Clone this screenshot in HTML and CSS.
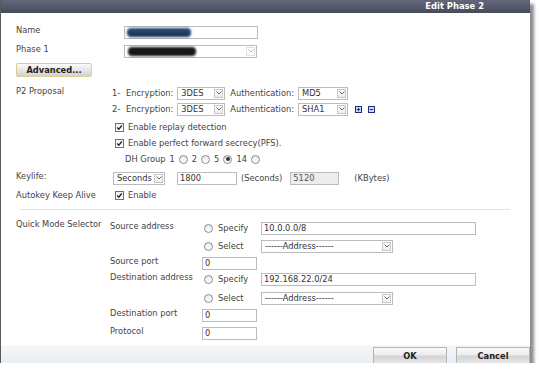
FILE: index.html
```html
<!DOCTYPE html>
<html lang="en">
<head>
  <meta charset="UTF-8">
  <title>Edit Phase 2</title>
  <link rel="stylesheet" href="styles.css">
</head>
<body>

  <div class="dialog">
    <div class="titlebar">Edit Phase 2</div>

    <div class="content">
      <!-- Name / Phase 1 -->
      <div class="row r-name">
        <span class="lbl">Name</span>
        <span class="field w-name"><span class="blur blue"></span></span>
      </div>
      <div class="row r-phase1">
        <span class="lbl">Phase 1</span>
        <span class="select w-phase1"><span class="val"><span class="blur black"></span></span><span class="arrow light"><svg width="6" height="4" viewBox="0 0 6 4"><path d="M0.5 0.5 L3 3 L5.5 0.5" fill="none" stroke="#b5b5b5" stroke-width="1"/></svg></span></span>
      </div>
      <div class="row r-adv">
        <button class="btn-adv">Advanced...</button>
      </div>

      <!-- P2 Proposal -->
      <div class="row r-p2a">
        <span class="lbl">P2 Proposal</span>
        <span class="num">1-</span>
        <span class="txt">Encryption:</span>
        <span class="select w-enc"><span class="val">3DES</span><span class="arrow"><svg width="6" height="4" viewBox="0 0 6 4"><path d="M0.5 0.5 L3 3 L5.5 0.5" fill="none" stroke="#666" stroke-width="1"/></svg></span></span>
        <span class="txt auth">Authentication:</span>
        <span class="select w-auth"><span class="val">MD5</span><span class="arrow"><svg width="6" height="4" viewBox="0 0 6 4"><path d="M0.5 0.5 L3 3 L5.5 0.5" fill="none" stroke="#666" stroke-width="1"/></svg></span></span>
      </div>
      <div class="row r-p2b">
        <span class="lbl"></span>
        <span class="num">2-</span>
        <span class="txt">Encryption:</span>
        <span class="select w-enc"><span class="val">3DES</span><span class="arrow"><svg width="6" height="4" viewBox="0 0 6 4"><path d="M0.5 0.5 L3 3 L5.5 0.5" fill="none" stroke="#666" stroke-width="1"/></svg></span></span>
        <span class="txt auth">Authentication:</span>
        <span class="select w-auth"><span class="val">SHA1</span><span class="arrow"><svg width="6" height="4" viewBox="0 0 6 4"><path d="M0.5 0.5 L3 3 L5.5 0.5" fill="none" stroke="#666" stroke-width="1"/></svg></span></span>
        <svg class="icon-plus" width="7" height="7" viewBox="0 0 7 7"><rect x="0.5" y="0.5" width="6" height="6" fill="#d4d9f2" stroke="#1f2d86"/><path d="M3.5 1.8 V5.2 M1.8 3.5 H5.2" stroke="#1f2d86" stroke-width="1"/></svg>
        <svg class="icon-minus" width="7" height="7" viewBox="0 0 7 7"><rect x="0.5" y="0.5" width="6" height="6" fill="#d4d9f2" stroke="#1f2d86"/><path d="M1.8 3.5 H5.2" stroke="#1f2d86" stroke-width="1"/></svg>
      </div>
      <div class="row r-check">
        <span class="lbl"></span>
        <span class="check"><svg width="7" height="7" viewBox="0 0 7 7"><path d="M1.2 3.5 L2.8 5.2 L5.8 1.5" fill="none" stroke="#222" stroke-width="1.3"/></svg></span>
        <span class="txt">Enable replay detection</span>
      </div>
      <div class="row r-tight">
        <span class="lbl"></span>
        <span class="check"><svg width="7" height="7" viewBox="0 0 7 7"><path d="M1.2 3.5 L2.8 5.2 L5.8 1.5" fill="none" stroke="#222" stroke-width="1.3"/></svg></span>
        <span class="txt">Enable perfect forward secrecy(PFS).</span>
      </div>
      <div class="row r-tight">
        <span class="lbl"></span>
        <span class="dh">
          <span class="txt">DH Group</span>
          <span class="txt">1</span><span class="radio"></span>
          <span class="txt">2</span><span class="radio"></span>
          <span class="txt">5</span><span class="radio on"></span>
          <span class="txt">14</span><span class="radio"></span>
        </span>
      </div>

      <!-- Keylife -->
      <div class="row r-keylife">
        <span class="lbl">Keylife:</span>
        <span class="select w-secs"><span class="val">Seconds</span><span class="arrow"><svg width="6" height="4" viewBox="0 0 6 4"><path d="M0.5 0.5 L3 3 L5.5 0.5" fill="none" stroke="#666" stroke-width="1"/></svg></span></span>
        <span class="field w-life">1800</span>
        <span class="txt">(Seconds)</span>
        <span class="field w-kb disabled">5120</span>
        <span class="txt kb">(KBytes)</span>
      </div>
      <div class="row r-keep">
        <span class="lbl mid">Autokey Keep Alive</span>
        <span class="check"><svg width="7" height="7" viewBox="0 0 7 7"><path d="M1.2 3.5 L2.8 5.2 L5.8 1.5" fill="none" stroke="#222" stroke-width="1.3"/></svg></span>
        <span class="txt">Enable</span>
      </div>

      <div class="separator"></div>

      <!-- Quick Mode Selector -->
      <div class="qms">
        <span class="lbl qms-lbl">Quick Mode Selector</span>
        <div class="qms-rows">
          <div class="row q-first">
            <span class="sub">Source address</span>
            <span class="opt"><span class="radio"></span><span class="txt">Specify</span></span>
            <span class="field w-addr">10.0.0.0/8</span>
          </div>
          <div class="row q-4">
            <span class="sub"></span>
            <span class="opt"><span class="radio"></span><span class="txt">Select</span></span>
            <span class="select w-list"><span class="val">------Address------</span><span class="arrow"><svg width="6" height="4" viewBox="0 0 6 4"><path d="M0.5 0.5 L3 3 L5.5 0.5" fill="none" stroke="#666" stroke-width="1"/></svg></span></span>
          </div>
          <div class="row q-3">
            <span class="sub">Source port</span>
            <span class="field w-port">0</span>
          </div>
          <div class="row q-2">
            <span class="sub">Destination address</span>
            <span class="opt"><span class="radio"></span><span class="txt">Specify</span></span>
            <span class="field w-addr">192.168.22.0/24</span>
          </div>
          <div class="row q-5">
            <span class="sub"></span>
            <span class="opt"><span class="radio"></span><span class="txt">Select</span></span>
            <span class="select w-list"><span class="val">------Address------</span><span class="arrow"><svg width="6" height="4" viewBox="0 0 6 4"><path d="M0.5 0.5 L3 3 L5.5 0.5" fill="none" stroke="#666" stroke-width="1"/></svg></span></span>
          </div>
          <div class="row q-3">
            <span class="sub">Destination port</span>
            <span class="field w-port">0</span>
          </div>
          <div class="row q-4">
            <span class="sub">Protocol</span>
            <span class="field w-port">0</span>
          </div>
        </div>
      </div>
    </div>

    <div class="footer">
      <button class="btn">OK</button>
      <button class="btn">Cancel</button>
    </div>
  </div>

</body>
</html>
```

FILE: styles.css
```css
/* Global */
body {
  margin: 0;
  background: #fff;
  font-family: 'DejaVu Sans', Verdana, sans-serif;
  font-size: 8.3px;
  color: #444;
}

.dialog {
  width: 530px;
  height: 363px;
  background: #fff;
  border-left: 1px solid #5a5a5a;
  box-shadow: 4px 4px 3px rgba(0, 0, 0, 0.45);
  display: flex;
  flex-direction: column;
  box-sizing: border-box;
}

/* Title bar */
.titlebar {
  height: 13px;
  line-height: 13px;
  background: linear-gradient(#62677a, #464b5c);
  color: #fff;
  font-weight: bold;
  font-size: 8.4px;
  text-align: right;
  padding-right: 46px;
}

.content {
  flex: 1;
  padding-left: 15px;
}

/* Rows */
.row {
  display: flex;
  align-items: center;
  height: 14px;
  margin-top: 3px;
}

.r-name { margin-top: 12px; }
.r-phase1 { margin-top: 5px; }
.r-adv { margin-top: 5px; }
.r-p2a { margin-top: 9px; }
.r-p2b { margin-top: 2px; }
.r-check { margin-top: 4px; }
.r-tight { margin-top: 2px; }
.r-keylife { margin-top: 5px; }
.r-keep { margin-top: 3px; }

.lbl {
  width: 96px;
  flex: none;
  align-self: flex-start;
  line-height: 10px;
}

.lbl.mid {
  align-self: center;
}

.txt {
  white-space: nowrap;
}

/* Inputs */
.field, .select {
  height: 13px;
  box-sizing: border-box;
  border: 1px solid #bcbcbc;
  background: #fff;
  line-height: 11px;
  padding-left: 2px;
  display: flex;
  align-items: center;
  flex: none;
  color: #333;
}

.select {
  padding-left: 0;
  justify-content: space-between;
}

.select .val {
  padding-left: 3px;
  padding-top: 1px;
  white-space: nowrap;
  display: flex;
  align-items: center;
}

.select .arrow {
  width: 9px;
  height: 9px;
  margin-right: 1px;
  border: 1px solid #c6c6c6;
  background: linear-gradient(#fff, #eee);
  display: flex;
  align-items: center;
  justify-content: center;
  box-sizing: border-box;
}

.select .arrow.light {
  border-color: #e0e0e0;
  background: #fff;
}

.disabled {
  background: #ededed;
  color: #555;
}

.w-name { width: 134px; margin-left: 12px; }
.w-phase1 { width: 133px; margin-left: 12px; }
.w-enc { width: 48px; margin-left: 4px; }
.w-auth { width: 50px; margin-left: 4px; }
.w-secs { width: 52px; margin-left: 1px; }
.w-life { width: 60px; margin-left: 12px; margin-right: 4px; }
.w-kb { width: 49px; margin-left: 8px; }
.w-addr { width: 215px; }
.w-list { width: 132px; }
.w-port { width: 55px; }

.kb { margin-left: 15px; }

.blur {
  display: block;
  height: 9px;
  border-radius: 4px;
  filter: blur(1px);
}

.blur.blue {
  width: 64px;
  background: linear-gradient(#2a4e78, #15304f);
}

.blur.black {
  width: 68px;
  background: #181818;
}

/* P2 proposal */
.num {
  width: 14px;
  flex: none;
}

.auth {
  margin-left: 5px;
}

.icon-plus {
  margin-left: 7px;
}

.icon-minus {
  margin-left: 6px;
}

/* Checkboxes and radios */
.check {
  width: 9px;
  height: 9px;
  box-sizing: border-box;
  border: 1px solid #707070;
  background: linear-gradient(#f2f2f2, #fff);
  margin-left: 3px;
  margin-right: 4px;
  display: flex;
  align-items: center;
  justify-content: center;
  flex: none;
}

.radio {
  width: 9px;
  height: 9px;
  box-sizing: border-box;
  border: 1px solid #8c8c8c;
  border-radius: 50%;
  background: linear-gradient(#e8e8e8, #fff);
  display: inline-flex;
  align-items: center;
  justify-content: center;
  flex: none;
}

.radio.on::after {
  content: "";
  width: 4px;
  height: 4px;
  border-radius: 50%;
  background: #333;
}

.dh {
  display: flex;
  align-items: center;
  gap: 4px;
  margin-left: 13px;
}

/* Separator */
.separator {
  height: 1px;
  background: #e2e2e2;
  margin: 7px 20px 0 4px;
}

/* Quick mode selector */
.qms {
  display: flex;
}

.qms-lbl {
  width: 94px;
  margin-top: 9px;
}

.qms-rows {
  display: flex;
  flex-direction: column;
}

.q-first { margin-top: 11px; }
.q-2 { margin-top: 2px; }
.q-3 { margin-top: 3px; }
.q-4 { margin-top: 4px; }
.q-5 { margin-top: 5px; }

.sub {
  width: 92px;
  flex: none;
  align-self: flex-start;
  line-height: 10px;
}

.opt {
  width: 57px;
  flex: none;
  display: flex;
  align-items: center;
  gap: 5px;
  margin-left: 2px;
}

/* Buttons */
.btn-adv {
  width: 76px;
  height: 14px;
  padding: 0;
  font-family: inherit;
  font-size: 8.3px;
  font-weight: bold;
  color: #222;
  border: 1px solid #d9cf8f;
  border-radius: 2px;
  background: linear-gradient(#fafafa, #e6e6e6 50%, #d2d2d2);
}

.footer {
  height: 18px;
  background: linear-gradient(#f5f8fa, #e8eef3);
  display: flex;
  justify-content: flex-end;
  align-items: flex-end;
  gap: 9px;
}

.btn {
  width: 74px;
  height: 16px;
  padding: 0;
  font-family: inherit;
  font-size: 8.3px;
  font-weight: bold;
  color: #222;
  border: 1px solid #b4b4b4;
  border-bottom: none;
  background: linear-gradient(#fbfbfb, #ececec 45%, #d4d4d4 55%, #e6e6e6);
}
```
